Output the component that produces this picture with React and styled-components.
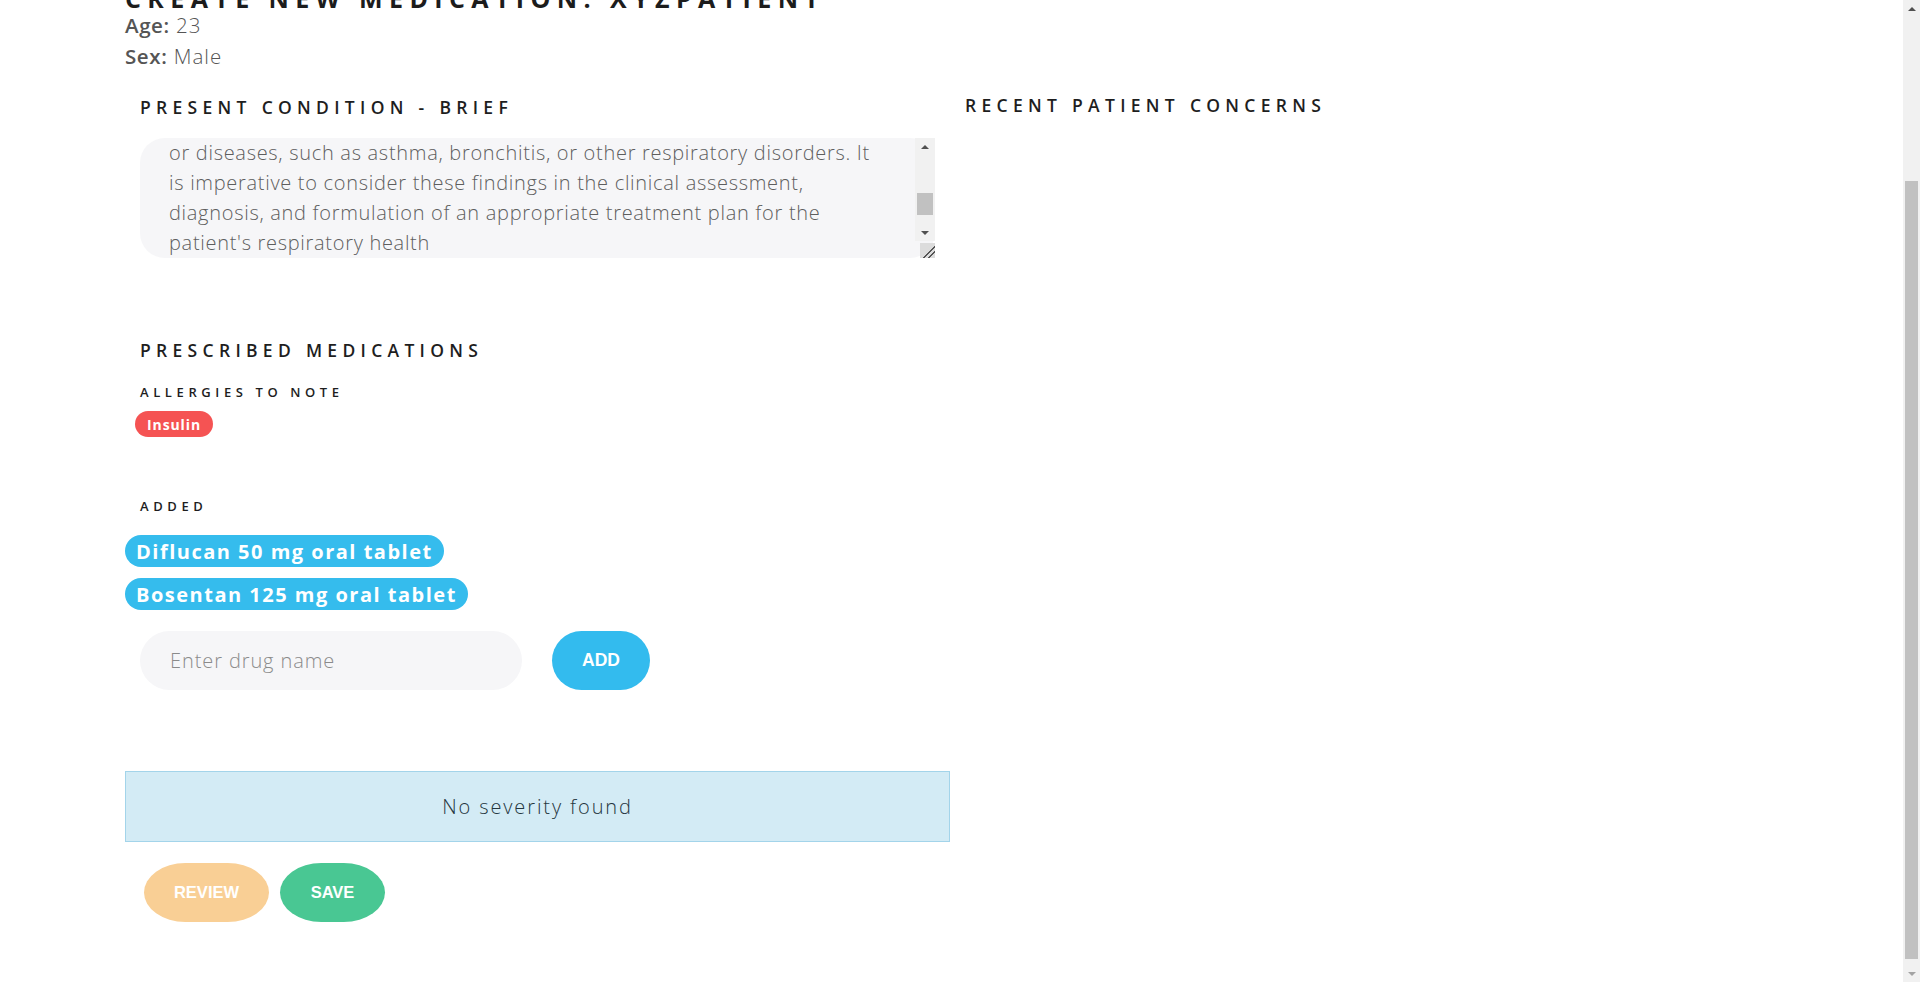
import React, { useLayoutEffect, useRef } from "react";
import styled, { createGlobalStyle } from "styled-components";

const GlobalStyle = createGlobalStyle`
  html { overflow-y: scroll; }
  body {
    margin: 0;
    background: #ffffff;
    font-family: "Open Sans", "Liberation Sans", sans-serif;
    color: #222;
  }
  * { box-sizing: border-box; }
  ::-webkit-scrollbar-corner { background: #dcdcdc; }
  ::-webkit-resizer {
    background-color: #dcdcdc;
    background-image: linear-gradient(
      135deg,
      transparent 58%,
      #555 58%,
      #555 64%,
      transparent 64%,
      transparent 76%,
      #555 76%,
      #555 82%,
      transparent 82%
    );
  }
`;

/* ---------- scrollbar drawing (browser chrome in the picture) ---------- */

const ScrollRail = styled.div`
  position: ${(p) => (p.$fixed ? "fixed" : "absolute")};
  top: 0;
  right: 0;
  bottom: ${(p) => p.$bottom || 0}px;
  width: ${(p) => p.$width}px;
  background: #f1f1f1;
  display: flex;
  flex-direction: column;
  justify-content: space-between;
  pointer-events: none;
  z-index: 5;
`;

const ScrollArrow = styled.div`
  height: 17px;
  display: flex;
  align-items: center;
  justify-content: center;
  &::before {
    content: "";
    border-left: 4px solid transparent;
    border-right: 4px solid transparent;
    ${(p) =>
      p.$down
        ? `border-top: 4px solid ${p.$color};`
        : `border-bottom: 4px solid ${p.$color};`}
  }
`;

const ScrollThumb = styled.div`
  position: absolute;
  left: 2px;
  right: 2px;
  top: ${(p) => p.$top}px;
  height: ${(p) => p.$height}px;
  background: #c1c1c1;
`;

function ScrollBar({ fixed, bottom, width = 17, thumbTop, thumbHeight, downColor }) {
  return (
    <ScrollRail $fixed={fixed} $bottom={bottom} $width={width}>
      <ScrollArrow $color="#505050" />
      <ScrollThumb $top={thumbTop} $height={thumbHeight} />
      <ScrollArrow $down $color={downColor} />
    </ScrollRail>
  );
}

/* ---------- page ---------- */

const Page = styled.div`
  min-height: 1197px;
  padding-bottom: 69px;
`;

const PageHead = styled.header`
  height: 193px;
`;

const Main = styled.main`
  padding-left: 125px;
`;

const Title = styled.h1`
  margin: 0;
  font-size: 25px;
  line-height: 24px;
  font-weight: 700;
  letter-spacing: 6.4px;
  color: #1c1c1c;
  white-space: nowrap;
`;

const Info = styled.div`
  font-size: 20.5px;
  line-height: 31px;
  font-weight: 300;
  color: #555;
  letter-spacing: 1px;
  b { font-weight: 600; color: #555; letter-spacing: 0.6px; }
`;

const Columns = styled.div`
  display: grid;
  grid-template-columns: 825px 1fr;
  column-gap: 15px;
`;

const Left = styled.section`
  display: flex;
  flex-direction: column;
  align-items: flex-start;
`;

const Right = styled.section``;

const SectionTitle = styled.h2`
  margin: ${(p) => p.$mt || 0}px 0 0 ${(p) => (p.$indent ? 15 : 0)}px;
  font-size: 17.5px;
  line-height: 24px;
  font-weight: 600;
  letter-spacing: 5.3px;
  color: #1e1e1e;
`;

const SubTitle = styled.h3`
  margin: ${(p) => p.$mt}px 0 0 15px;
  font-size: 13px;
  line-height: 18px;
  font-weight: 600;
  letter-spacing: 4.6px;
  color: #1e1e1e;
`;

const BriefField = styled.div`
  position: relative;
  margin: 19px 0 0 15px;
  width: 795px;
  height: 120px;
`;

const Brief = styled.textarea`
  display: block;
  width: 795px;
  height: 120px;
  padding: 0 8px 0 29px;
  border: none;
  outline: none;
  border-radius: 25px;
  background: #f6f6f8;
  font-family: "Open Sans", "Liberation Sans", sans-serif;
  font-size: 20px;
  font-weight: 300;
  letter-spacing: 0.7px;
  line-height: 30px;
  color: #5e5e5e;
  resize: both;
`;

const Allergy = styled.span`
  margin: 10px 0 0 10px;
  display: inline-flex;
  align-items: center;
  height: 26px;
  padding: 0 12px;
  border-radius: 13px;
  background: #f55353;
  color: #fff;
  font-size: 14px;
  font-weight: 700;
  letter-spacing: 0.9px;
`;

const DrugList = styled.div`
  margin-top: 20px;
  display: flex;
  flex-direction: column;
  align-items: flex-start;
  gap: 11px;
`;

const Drug = styled.span`
  display: inline-flex;
  align-items: center;
  height: 32px;
  padding: 0 11px;
  border-radius: 16px;
  background: #35bced;
  color: #fff;
  font-size: 20px;
  font-weight: 700;
  letter-spacing: 1.5px;
`;

const AddRow = styled.div`
  margin: 21px 0 0 15px;
  display: flex;
  align-items: center;
  gap: 30px;
`;

const DrugInput = styled.input`
  width: 382px;
  height: 59px;
  padding: 0 0 0 30px;
  border: none;
  outline: none;
  border-radius: 30px;
  background: #f6f6f8;
  font-family: "Open Sans", "Liberation Sans", sans-serif;
  font-size: 20px;
  font-weight: 300;
  letter-spacing: 0.9px;
  color: #333;
  &::placeholder { color: #8b8b8b; }
`;

const PillButton = styled.button`
  height: 59px;
  width: ${(p) => p.$w}px;
  border: none;
  border-radius: ${(p) => (p.$oval ? "42px / 30px" : "30px")};
  background: ${(p) => p.$bg};
  color: #fff;
  font-family: "Liberation Sans", Arial, sans-serif;
  font-size: ${(p) => (p.$oval ? 16.5 : 17.5)}px;
  font-weight: 700;
  cursor: pointer;
`;

const SeverityBox = styled.div`
  margin-top: 81px;
  width: 825px;
  height: 71px;
  display: flex;
  align-items: center;
  justify-content: center;
  background: #d3ebf5;
  border: 1px solid #a3d4ea;
  font-size: 20px;
  font-weight: 300;
  letter-spacing: 1.9px;
  color: #25363e;
`;

const Actions = styled.div`
  margin: 21px 0 0 19px;
  display: flex;
  gap: 11px;
`;

const BRIEF_TEXT =
  "The patient presented to the clinic with complaints of persistent cough, shortness of breath and mild chest discomfort over the past several weeks. Auscultation revealed scattered wheezes bilaterally with a prolonged expiratory phase, and the chest radiograph demonstrated increased bronchovascular markings in both lower lobes. Pulmonary function testing showed a reduced FEV1/FVC ratio with partial reversibility after bronchodilator administration. These findings are suggestive of underlying respiratory conditions\n" +
  "or diseases, such as asthma, bronchitis, or other respiratory disorders. It\n" +
  "is imperative to consider these findings in the clinical assessment,\n" +
  "diagnosis, and formulation of an appropriate treatment plan for the\n" +
  "patient's respiratory health";

export default function App() {
  const briefRef = useRef(null);

  useLayoutEffect(() => {
    if (briefRef.current) {
      briefRef.current.scrollTop = briefRef.current.scrollHeight;
    }
    window.scrollTo(0, 207);
    const id = requestAnimationFrame(() => window.scrollTo(0, 207));
    return () => cancelAnimationFrame(id);
  }, []);

  return (
    <>
      <GlobalStyle />
      <Page>
        <PageHead />
        <Main>
          <Title>CREATE NEW MEDICATION: XYZPATIENT</Title>
          <Info>
            <b>Age:</b> 23
          </Info>
          <Info>
            <b>Sex:</b> Male
          </Info>
          <Columns>
            <Left>
              <SectionTitle $indent $mt={23}>
                PRESENT CONDITION - BRIEF
              </SectionTitle>
              <BriefField>
                <Brief ref={briefRef} defaultValue={BRIEF_TEXT} />
                <ScrollBar
                  bottom={17}
                  width={20}
                  thumbTop={55}
                  thumbHeight={22}
                  downColor="#505050"
                />
              </BriefField>
              <SectionTitle $indent $mt={80}>
                PRESCRIBED MEDICATIONS
              </SectionTitle>
              <SubTitle $mt={21}>ALLERGIES TO NOTE</SubTitle>
              <Allergy>Insulin</Allergy>
              <SubTitle $mt={60}>ADDED</SubTitle>
              <DrugList>
                <Drug>Diflucan 50 mg oral tablet</Drug>
                <Drug>Bosentan 125 mg oral tablet</Drug>
              </DrugList>
              <AddRow>
                <DrugInput placeholder="Enter drug name" />
                <PillButton $w={98} $bg="#33bbee">
                  ADD
                </PillButton>
              </AddRow>
              <SeverityBox>No severity found</SeverityBox>
              <Actions>
                <PillButton $w={125} $bg="#f9cf95" $oval>
                  REVIEW
                </PillButton>
                <PillButton $w={105} $bg="#49c793" $oval>
                  SAVE
                </PillButton>
              </Actions>
            </Left>
            <Right>
              <SectionTitle $mt={21}>RECENT PATIENT CONCERNS</SectionTitle>
            </Right>
          </Columns>
        </Main>
      </Page>
      <ScrollBar fixed thumbTop={181} thumbHeight={778} downColor="#a3a3a3" />
    </>
  );
}
